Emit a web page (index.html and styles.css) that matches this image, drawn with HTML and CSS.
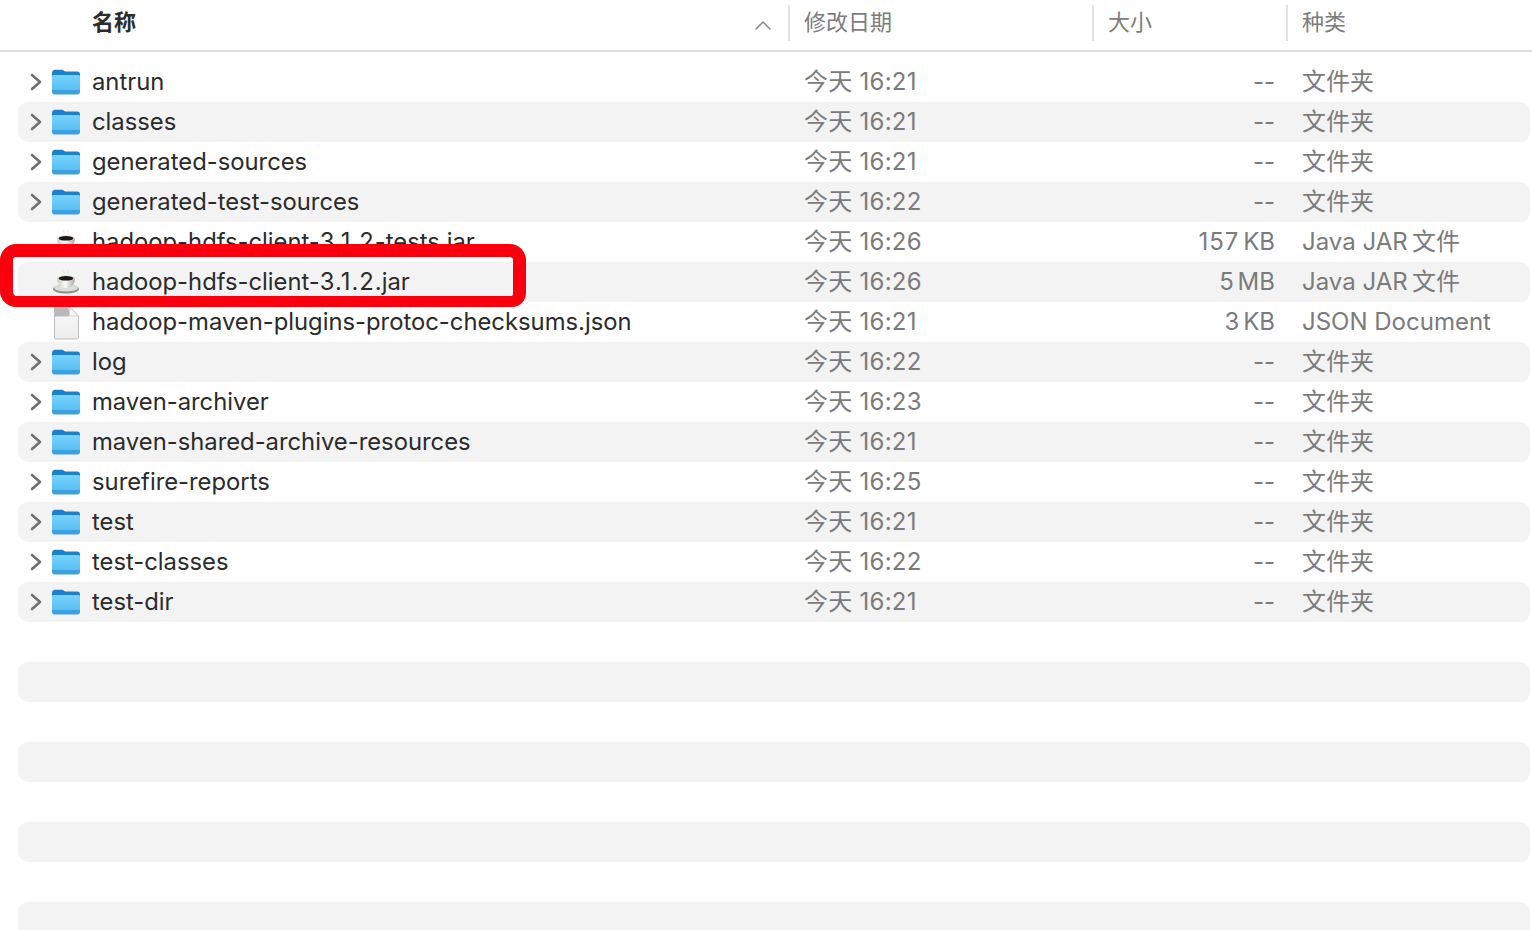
FILE: index.html
```html
<!DOCTYPE html>
<html lang="zh">
<head>
<meta charset="utf-8">
<title>Finder</title>
<link rel="stylesheet" href="styles.css">
</head>
<body>
<svg class="defs" width="0" height="0" aria-hidden="true">
  <defs>
    <linearGradient id="fb" x1="0" y1="0" x2="0" y2="1"><stop offset="0" stop-color="#78d2fc"/><stop offset="1" stop-color="#58bff5"/></linearGradient>
    <linearGradient id="ds" x1="0" y1="0" x2="0" y2="1"><stop offset="0" stop-color="#fbfbfb"/><stop offset="1" stop-color="#ececec"/></linearGradient>
    <linearGradient id="cup" x1="0" y1="0" x2="1" y2="0"><stop offset="0" stop-color="#c9c9c4"/><stop offset=".45" stop-color="#fafafa"/><stop offset="1" stop-color="#a9a9a4"/></linearGradient>
    <symbol id="folder" viewBox="0 0 30 26">
      <path d="M1 4.500C1 2 2 .8 4 .8h7c1.600 0 2.200 1.800 4 1.800h11c2 0 3 1 3 3V22H1z" fill="#1b80c9"/>
      <path d="M1 7.500c0-1 .6-1.600 1.600-1.600h24.800c1 0 1.600 .6 1.600 1.600V21H1z" fill="url(#fb)"/>
      <path d="M1 21h28v1.800c0 1.800-1 2.800-2.800 2.800H3.800C2 25.600 1 24.600 1 22.800z" fill="#3f9fdd"/>
    </symbol>
    <symbol id="chev" viewBox="0 0 14 20">
      <path d="M3 3l8 7-8 7" fill="none" stroke="#6f6f6f" stroke-width="2.600" stroke-linecap="round" stroke-linejoin="round"/>
    </symbol>
    <symbol id="jar" viewBox="0 0 30 26">
      <ellipse cx="15" cy="20" rx="13" ry="4.500" fill="#8d8d88"/>
      <ellipse cx="15" cy="19" rx="12" ry="3.500" fill="#dcdcd8"/>
      <path d="M6 9c0 6 3 10 9 10s9-4 9-10z" fill="url(#cup)"/>
      <ellipse cx="15" cy="9" rx="9" ry="3" fill="#e8e8e6"/>
      <ellipse cx="15" cy="9.300" rx="7.500" ry="2.300" fill="#1d1613"/>
      <path d="M13 1.500c-1 1.500 1 2 0 4M17 1.500c-1 1.500 1 2 0 4" fill="none" stroke="#d8d8d8" stroke-width="1" opacity=".7"/>
    </symbol>
    <symbol id="doc" viewBox="0 0 30 34">
      <path d="M3.500 1h15l9 9v21.500c0 1-.6 1.500-1.500 1.500H5c-1 0-1.500-.5-1.500-1.500z" fill="url(#ds)" stroke="#bdbdbd" stroke-width="1"/>
      <path d="M4 1.500h13.500l1 9h-14.500z" fill="#b9b9b9"/>
      <path d="M18.500 1l9 9h-7.500c-1 0-1.500-.5-1.500-1.500z" fill="#f6f6f6" stroke="#c4c4c4" stroke-width=".7"/>
    </symbol>
  </defs>
</svg>

<header class="head">
  <div class="hcol hname"><span class="htitle">名称</span>
    <svg class="sort" width="18" height="12" viewBox="0 0 18 12"><path d="M2 10l7-7 7 7" fill="none" stroke="#8a8a8a" stroke-width="1.600" stroke-linecap="round" stroke-linejoin="round"/></svg>
  </div>
  <div class="hcol hdate">修改日期</div>
  <div class="hcol hsize">大小</div>
  <div class="hcol hkind">种类</div>
</header>

<main class="list">
  <div class="row"><svg class="chev"><use href="#chev"/></svg><svg class="ico"><use href="#folder"/></svg><span class="name">antrun</span><span class="date">今天 16:21</span><span class="size">--</span><span class="kind">文件夹</span></div>
  <div class="row"><svg class="chev"><use href="#chev"/></svg><svg class="ico"><use href="#folder"/></svg><span class="name">classes</span><span class="date">今天 16:21</span><span class="size">--</span><span class="kind">文件夹</span></div>
  <div class="row"><svg class="chev"><use href="#chev"/></svg><svg class="ico"><use href="#folder"/></svg><span class="name">generated-sources</span><span class="date">今天 16:21</span><span class="size">--</span><span class="kind">文件夹</span></div>
  <div class="row"><svg class="chev"><use href="#chev"/></svg><svg class="ico"><use href="#folder"/></svg><span class="name">generated-test-sources</span><span class="date">今天 16:22</span><span class="size">--</span><span class="kind">文件夹</span></div>
  <div class="row"><span class="nochev"></span><svg class="ico"><use href="#jar"/></svg><span class="name">hadoop-hdfs-client-<span class="ver">3.1.2</span>-tests.jar</span><span class="date">今天 16:26</span><span class="size"><span class="ver">157</span> KB</span><span class="kind">Java JAR&thinsp;文件</span></div>
  <div class="row"><span class="nochev"></span><svg class="ico"><use href="#jar"/></svg><span class="name">hadoop-hdfs-client-<span class="ver">3.1.2</span>.jar</span><span class="date">今天 16:26</span><span class="size">5 MB</span><span class="kind">Java JAR&thinsp;文件</span></div>
  <div class="row"><span class="nochev"></span><svg class="ico icodoc"><use href="#doc"/></svg><span class="name">hadoop-maven-plugins-protoc-checksums.json</span><span class="date">今天 16:21</span><span class="size">3 KB</span><span class="kind">JSON Document</span></div>
  <div class="row"><svg class="chev"><use href="#chev"/></svg><svg class="ico"><use href="#folder"/></svg><span class="name">log</span><span class="date">今天 16:22</span><span class="size">--</span><span class="kind">文件夹</span></div>
  <div class="row"><svg class="chev"><use href="#chev"/></svg><svg class="ico"><use href="#folder"/></svg><span class="name">maven-archiver</span><span class="date">今天 16:23</span><span class="size">--</span><span class="kind">文件夹</span></div>
  <div class="row"><svg class="chev"><use href="#chev"/></svg><svg class="ico"><use href="#folder"/></svg><span class="name">maven-shared-archive-resources</span><span class="date">今天 16:21</span><span class="size">--</span><span class="kind">文件夹</span></div>
  <div class="row"><svg class="chev"><use href="#chev"/></svg><svg class="ico"><use href="#folder"/></svg><span class="name">surefire-reports</span><span class="date">今天 16:25</span><span class="size">--</span><span class="kind">文件夹</span></div>
  <div class="row"><svg class="chev"><use href="#chev"/></svg><svg class="ico"><use href="#folder"/></svg><span class="name">test</span><span class="date">今天 16:21</span><span class="size">--</span><span class="kind">文件夹</span></div>
  <div class="row"><svg class="chev"><use href="#chev"/></svg><svg class="ico"><use href="#folder"/></svg><span class="name">test-classes</span><span class="date">今天 16:22</span><span class="size">--</span><span class="kind">文件夹</span></div>
  <div class="row"><svg class="chev"><use href="#chev"/></svg><svg class="ico"><use href="#folder"/></svg><span class="name">test-dir</span><span class="date">今天 16:21</span><span class="size">--</span><span class="kind">文件夹</span></div>
  <div class="row"></div>
  <div class="row"></div>
  <div class="row"></div>
  <div class="row"></div>
  <div class="row"></div>
  <div class="row"></div>
  <div class="row"></div>
  <div class="row"></div>
</main>

<div class="mark"></div>
</body>
</html>
```
FILE: styles.css
```css
* { box-sizing: border-box; }
html, body { height: 100%; }
body {
  margin: 0;
  background: #fff;
  overflow: hidden;
  font-family: Inter, "Noto Sans CJK SC", sans-serif;
  position: relative;
}
.defs { position: absolute; }

.head {
  height: 52px;
  border-bottom: 2px solid #dedede;
  display: grid;
  grid-template-columns: 790px 304px 194px 1fr;
  align-items: start;
  padding-top: 5px;
  font-size: 22px;
  color: #7c7c7c;
}
.hcol {
  height: 36px;
  line-height: 34px;
  border-right: 2px solid #e2e2e2;
  padding-left: 14px;
  white-space: nowrap;
}
.hname {
  padding-left: 92px;
  padding-right: 16px;
  display: flex;
  justify-content: space-between;
  align-items: center;
}
.htitle { font-weight: 700; color: #2c2c2c; margin-top: -2px; }
.sort { margin-top: 3px; }
.hkind { border-right: 0; }

.list { padding: 10px 2px 0 18px; }
.row {
  height: 40px;
  border-radius: 10px;
  display: grid;
  grid-template-columns: 34px 40px 712px 200px 271px 1fr;
  align-items: center;
  font-size: 24px;
  line-height: 36px;
  color: #7b7b7b;
  white-space: nowrap;
}
.row:nth-child(even) { background: #f3f3f3; }
.chev { width: 14px; height: 20px; margin-left: 11px; }
.ico { width: 30px; height: 26px; margin-left: -1px; }
.icodoc { height: 34px; margin-top: 2px; }
.name { color: #2b2b2b; font-size: 23.800px; line-height: 38px; }
.ver { letter-spacing: 1px; }
.date { letter-spacing: .25px; }
.size { text-align: right; word-spacing: -3px; }
.kind { padding-left: 27px; }

.mark {
  position: absolute;
  left: 0;
  top: 244px;
  width: 526px;
  height: 63px;
  border: 13px solid #fa000f;
  border-bottom-width: 11px;
  border-radius: 16px 16px 14px 16px;
}
```
